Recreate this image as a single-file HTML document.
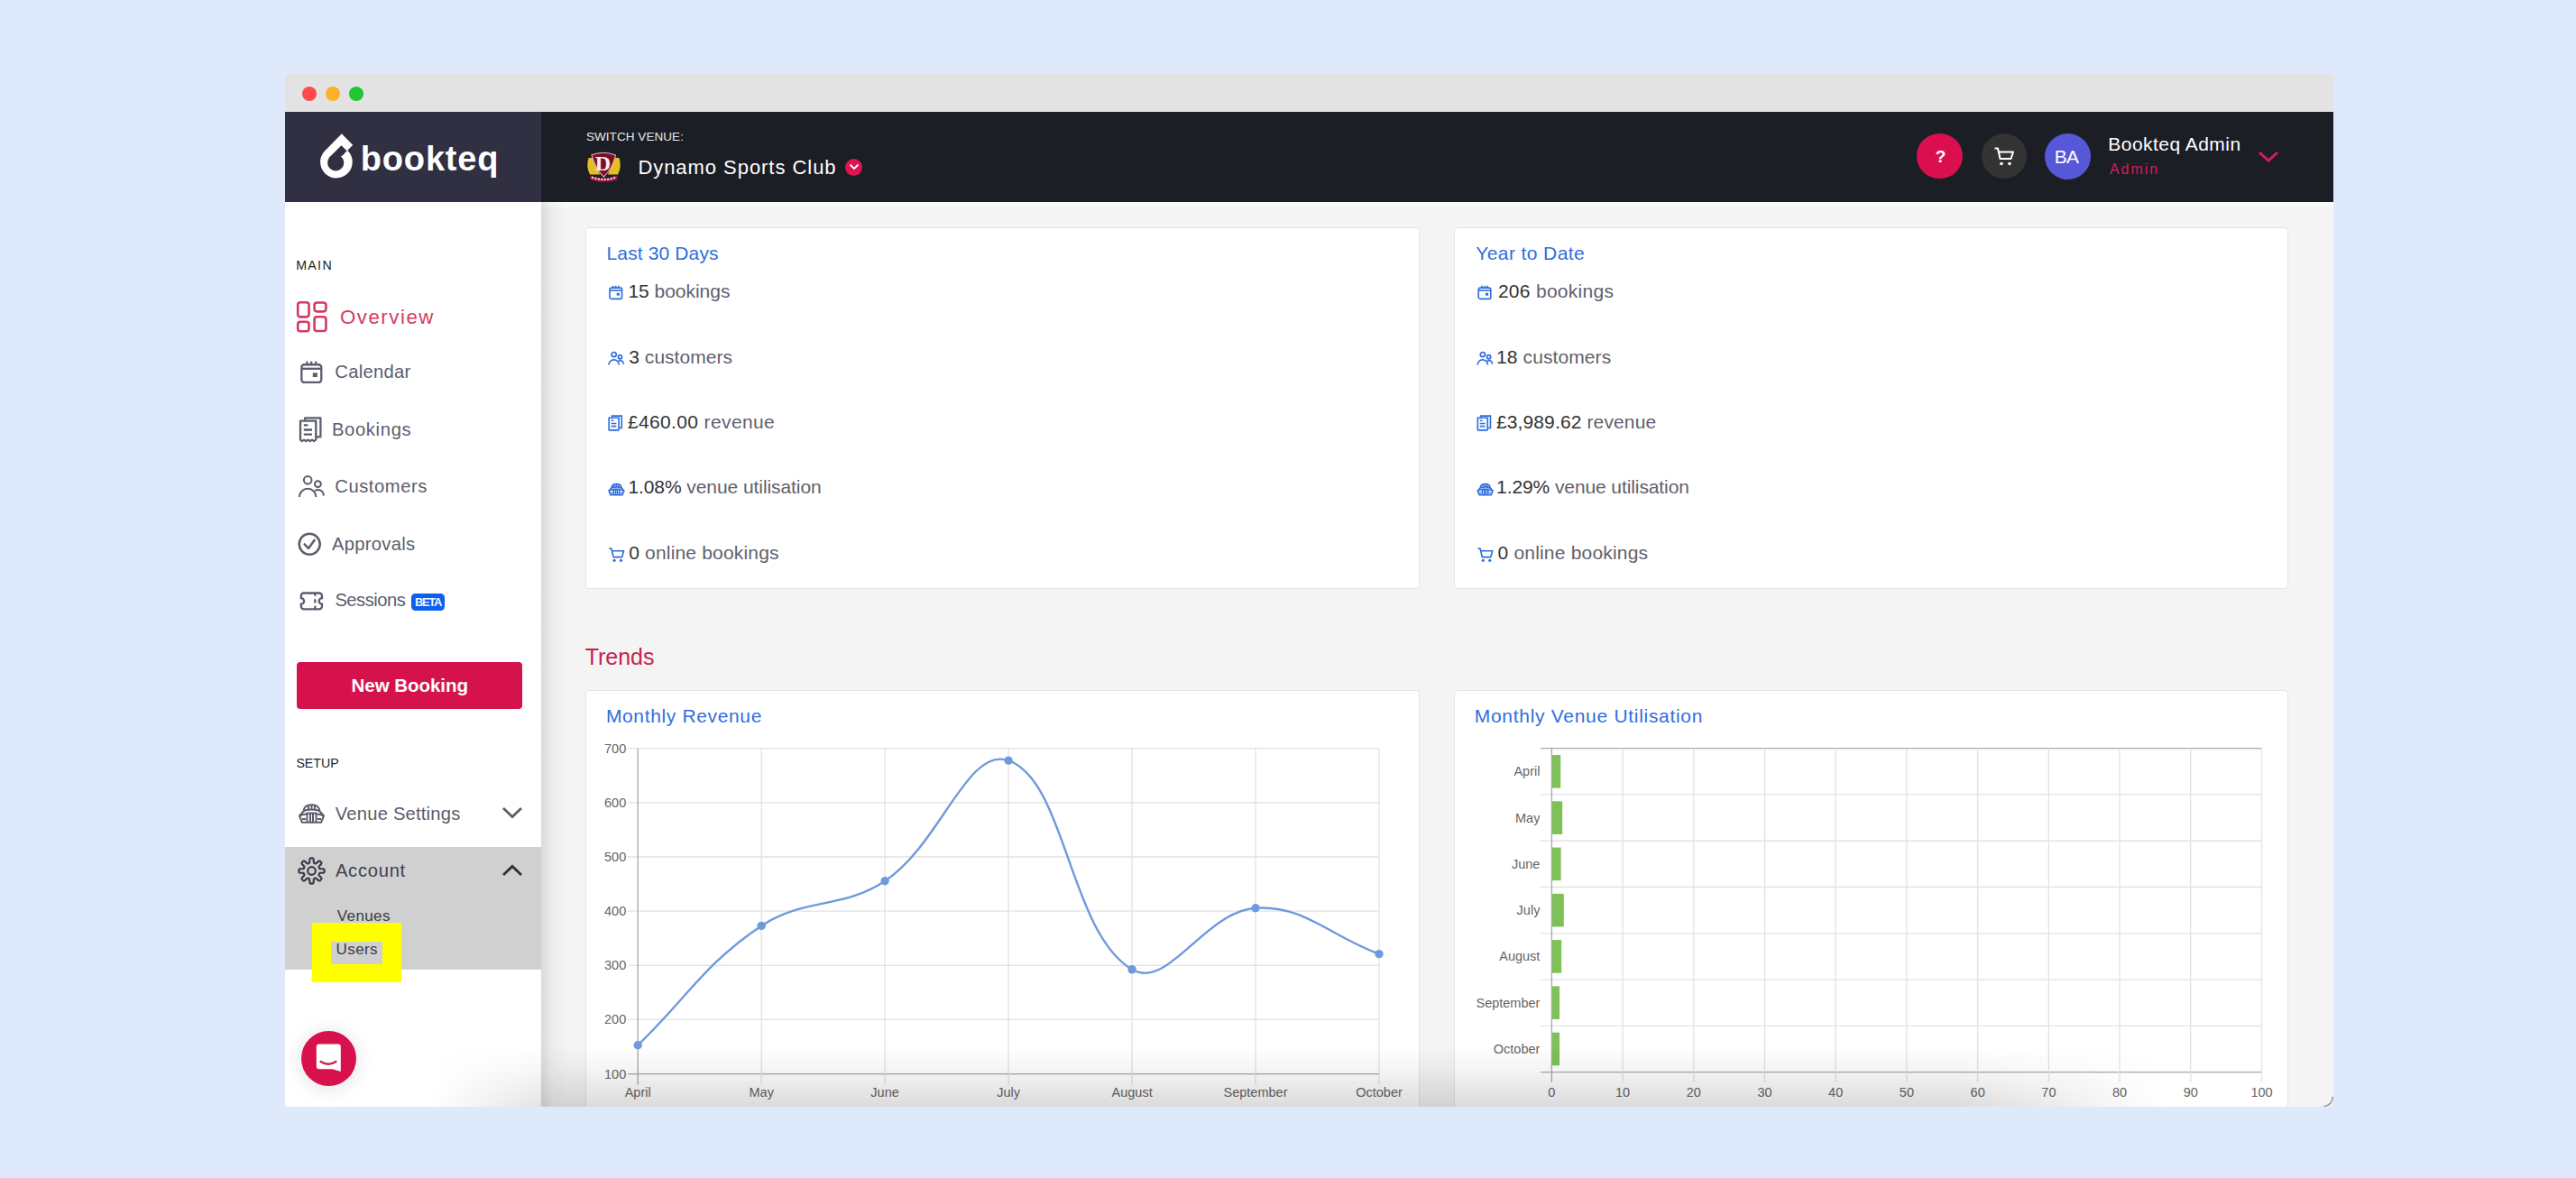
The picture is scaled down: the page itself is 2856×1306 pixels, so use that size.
<!DOCTYPE html>
<html><head><meta charset="utf-8"><style>
html,body{margin:0;padding:0;}
body{width:2856px;height:1306px;background:#deeafc;position:relative;overflow:hidden;font-family:"Liberation Sans", sans-serif;}
.a{position:absolute;}
.t{position:absolute;line-height:1;white-space:nowrap;font-family:"Liberation Sans", sans-serif;}
svg.a{overflow:visible;}
</style></head><body>
<div class="a" style="left:316px;top:82px;width:2270.5px;height:1144.5px;background:#f4f4f4;border-radius:3px 3px 8px 4px;overflow:hidden;"></div>
<div class="a" style="left:316px;top:82px;width:2270.5px;height:42px;background:#e3e3e3;border-radius:3px 3px 0 0;"></div>
<div class="a" style="left:335.1px;top:96.4px;width:16.0px;height:16.0px;border-radius:50%;background:#fe4a49;"></div>
<div class="a" style="left:361.0px;top:96.4px;width:16.0px;height:16.0px;border-radius:50%;background:#fdb12b;"></div>
<div class="a" style="left:387.2px;top:96.4px;width:16.0px;height:16.0px;border-radius:50%;background:#20c634;"></div>
<div class="a" style="left:0;top:0;width:2856px;height:1226.5px;overflow:hidden;">
<div class="t" style="left:655.3px;top:201.8px;font-size:26px;color:#c8234f;font-weight:400;letter-spacing:-0.593px;">Overview</div>
<div class="a" style="left:599.5px;top:223.5px;width:1987.0px;height:10px;background:linear-gradient(180deg,rgba(255,255,255,0.7),rgba(255,255,255,0));"></div>
<div class="a" style="left:599.5px;top:222.5px;width:30px;height:1004.0px;background:linear-gradient(90deg,rgba(30,30,60,0.12),rgba(30,30,60,0.035) 40%,rgba(30,30,60,0));"></div>
<div class="a" style="left:649.2px;top:251.6px;width:924.5999999999999px;height:401.29999999999995px;background:#fff;border:1.5px solid #e4e4e4;box-sizing:border-box;border-radius:4px;"></div>
<div class="a" style="left:1612.4px;top:251.6px;width:924.9000000000001px;height:401.29999999999995px;background:#fff;border:1.5px solid #e4e4e4;box-sizing:border-box;border-radius:4px;"></div>
<div class="t" style="left:672.5px;top:270.2px;font-size:21px;color:#2f6edb;font-weight:400;letter-spacing:0.135px;">Last 30 Days</div>
<div class="t" style="left:1636.3px;top:270.0px;font-size:21px;color:#2f6edb;font-weight:400;letter-spacing:0.395px;">Year to Date</div>
<svg class="a" style="left:0;top:0" width="2856" height="1306" viewBox="0 0 2856 1306"><g transform="translate(675.3000000000001,316.8) scale(0.62)"><g fill="none" stroke="#2f6edb" stroke-width="2.6"><rect x="1.15" y="3.75" width="21.9" height="19.7" rx="3"/><line x1="1.15" y1="8.3" x2="23.05" y2="8.3"/><line x1="7.2" y1="0.1" x2="7.2" y2="4.5"/><line x1="12" y1="0.1" x2="12" y2="4.5"/><line x1="17" y1="0.1" x2="17" y2="4.5"/></g><g fill="#2f6edb"><rect x="13.6" y="12.8" width="5.1" height="4.7"/></g></g></svg>
<div class="t" style="left:696.4px;top:311.9px;font-size:21px;letter-spacing:-0.028px;"><span style="color:#333333">15</span> <span style="color:#5f616c">bookings</span></div>
<svg class="a" style="left:0;top:0" width="2856" height="1306" viewBox="0 0 2856 1306"><g transform="translate(674.4000000000001,390.5) scale(0.607)"><g fill="none" stroke="#2f6edb" stroke-width="2.8"><circle cx="10.3" cy="4.3" r="4.3"/><circle cx="21.5" cy="8.7" r="3.4"/><path d="M1 23 A9.25 9.25 0 0 1 19.5 23"/><path d="M18.3 16.2 C22.1 13.6 27.7 15.6 28 21.6"/></g><g fill="#2f6edb"></g></g></svg>
<div class="t" style="left:697.3px;top:384.8px;font-size:21px;letter-spacing:0.023px;"><span style="color:#333333">3</span> <span style="color:#5f616c">customers</span></div>
<svg class="a" style="left:0;top:0" width="2856" height="1306" viewBox="0 0 2856 1306"><g transform="translate(674.4000000000001,460.4) scale(0.63)"><g fill="none" stroke="#2f6edb" stroke-width="2.6"><path d="M1.2 4.5 H18.5 V25.5 L16.3 26.9 L14.1 25.5 L11.9 26.9 L9.7 25.5 L7.5 26.9 L5.3 25.5 L3.1 26.9 L1.2 25.5 Z"/><path d="M6.4 3.7 V1.2 H23.6 V22.3 H19.2"/><path d="M5 9.3 H9.5 M5 14.4 H14.2 M5 19.5 H14.2"/></g><g fill="#2f6edb"></g></g></svg>
<div class="t" style="left:695.9px;top:457.1px;font-size:21px;letter-spacing:0.369px;"><span style="color:#333333">£460.00</span> <span style="color:#5f616c">revenue</span></div>
<svg class="a" style="left:0;top:0" width="2856" height="1306" viewBox="0 0 2856 1306"><g transform="translate(674.4000000000001,535.8) scale(0.625)"><g fill="none" stroke="#2f6edb" stroke-width="2.5"><path d="M5.5 8.5 C6 3 10 1.2 14.5 1.2 C19 1.2 23 3 23.5 8.5 L28 13.5 L25 20.8 H4 L1 13.5 Z"/><path d="M5.5 8.5 C9 5.8 20 5.8 23.5 8.5"/><path d="M1 13.5 C4 12 7 11.5 9.5 11.5 M28 13.5 C25 12 22 11.5 19.5 11.5"/><path d="M9.5 20.8 V10.5 H19.5 V20.8"/><line x1="13" y1="11" x2="13" y2="20.8"/><line x1="16" y1="11" x2="16" y2="20.8"/><line x1="11" y1="2.5" x2="11" y2="6.5"/><line x1="14.5" y1="1.5" x2="14.5" y2="6"/><line x1="18" y1="2.5" x2="18" y2="6.5"/><path d="M4 17 H8 M21 17 H25"/></g><g fill="#2f6edb"></g></g></svg>
<div class="t" style="left:696.4px;top:529.2px;font-size:21px;letter-spacing:-0.075px;"><span style="color:#333333">1.08%</span> <span style="color:#5f616c">venue utilisation</span></div>
<svg class="a" style="left:0;top:0" width="2856" height="1306" viewBox="0 0 2856 1306"><g transform="translate(674.4000000000001,606.8) scale(0.93)"><g fill="none" stroke="#2f6edb" stroke-width="1.75"><path d="M0.9 1.3 H3.6 L6.2 11.6 H16.3 L18.4 4.3 H4.6" stroke-linejoin="round"/></g><g fill="#2f6edb"><circle cx="7.2" cy="15.6" r="1.7"/><circle cx="15.2" cy="15.6" r="1.7"/></g></g></svg>
<div class="t" style="left:697.2px;top:602.2px;font-size:21px;letter-spacing:0.181px;"><span style="color:#333333">0</span> <span style="color:#5f616c">online bookings</span></div>
<svg class="a" style="left:0;top:0" width="2856" height="1306" viewBox="0 0 2856 1306"><g transform="translate(1638.5,316.8) scale(0.62)"><g fill="none" stroke="#2f6edb" stroke-width="2.6"><rect x="1.15" y="3.75" width="21.9" height="19.7" rx="3"/><line x1="1.15" y1="8.3" x2="23.05" y2="8.3"/><line x1="7.2" y1="0.1" x2="7.2" y2="4.5"/><line x1="12" y1="0.1" x2="12" y2="4.5"/><line x1="17" y1="0.1" x2="17" y2="4.5"/></g><g fill="#2f6edb"><rect x="13.6" y="12.8" width="5.1" height="4.7"/></g></g></svg>
<div class="t" style="left:1660.9px;top:311.9px;font-size:21px;letter-spacing:0.285px;"><span style="color:#333333">206</span> <span style="color:#5f616c">bookings</span></div>
<svg class="a" style="left:0;top:0" width="2856" height="1306" viewBox="0 0 2856 1306"><g transform="translate(1637.6000000000001,390.5) scale(0.607)"><g fill="none" stroke="#2f6edb" stroke-width="2.8"><circle cx="10.3" cy="4.3" r="4.3"/><circle cx="21.5" cy="8.7" r="3.4"/><path d="M1 23 A9.25 9.25 0 0 1 19.5 23"/><path d="M18.3 16.2 C22.1 13.6 27.7 15.6 28 21.6"/></g><g fill="#2f6edb"></g></g></svg>
<div class="t" style="left:1659.1px;top:384.8px;font-size:21px;letter-spacing:0.091px;"><span style="color:#333333">18</span> <span style="color:#5f616c">customers</span></div>
<svg class="a" style="left:0;top:0" width="2856" height="1306" viewBox="0 0 2856 1306"><g transform="translate(1637.6000000000001,460.4) scale(0.63)"><g fill="none" stroke="#2f6edb" stroke-width="2.6"><path d="M1.2 4.5 H18.5 V25.5 L16.3 26.9 L14.1 25.5 L11.9 26.9 L9.7 25.5 L7.5 26.9 L5.3 25.5 L3.1 26.9 L1.2 25.5 Z"/><path d="M6.4 3.7 V1.2 H23.6 V22.3 H19.2"/><path d="M5 9.3 H9.5 M5 14.4 H14.2 M5 19.5 H14.2"/></g><g fill="#2f6edb"></g></g></svg>
<div class="t" style="left:1658.9px;top:457.1px;font-size:21px;letter-spacing:0.133px;"><span style="color:#333333">£3,989.62</span> <span style="color:#5f616c">revenue</span></div>
<svg class="a" style="left:0;top:0" width="2856" height="1306" viewBox="0 0 2856 1306"><g transform="translate(1637.6000000000001,535.8) scale(0.625)"><g fill="none" stroke="#2f6edb" stroke-width="2.5"><path d="M5.5 8.5 C6 3 10 1.2 14.5 1.2 C19 1.2 23 3 23.5 8.5 L28 13.5 L25 20.8 H4 L1 13.5 Z"/><path d="M5.5 8.5 C9 5.8 20 5.8 23.5 8.5"/><path d="M1 13.5 C4 12 7 11.5 9.5 11.5 M28 13.5 C25 12 22 11.5 19.5 11.5"/><path d="M9.5 20.8 V10.5 H19.5 V20.8"/><line x1="13" y1="11" x2="13" y2="20.8"/><line x1="16" y1="11" x2="16" y2="20.8"/><line x1="11" y1="2.5" x2="11" y2="6.5"/><line x1="14.5" y1="1.5" x2="14.5" y2="6"/><line x1="18" y1="2.5" x2="18" y2="6.5"/><path d="M4 17 H8 M21 17 H25"/></g><g fill="#2f6edb"></g></g></svg>
<div class="t" style="left:1659.1px;top:529.2px;font-size:21px;letter-spacing:-0.098px;"><span style="color:#333333">1.29%</span> <span style="color:#5f616c">venue utilisation</span></div>
<svg class="a" style="left:0;top:0" width="2856" height="1306" viewBox="0 0 2856 1306"><g transform="translate(1637.6000000000001,606.8) scale(0.93)"><g fill="none" stroke="#2f6edb" stroke-width="1.75"><path d="M0.9 1.3 H3.6 L6.2 11.6 H16.3 L18.4 4.3 H4.6" stroke-linejoin="round"/></g><g fill="#2f6edb"><circle cx="7.2" cy="15.6" r="1.7"/><circle cx="15.2" cy="15.6" r="1.7"/></g></g></svg>
<div class="t" style="left:1660.5px;top:602.2px;font-size:21px;letter-spacing:0.193px;"><span style="color:#333333">0</span> <span style="color:#5f616c">online bookings</span></div>
<div class="t" style="left:648.7px;top:716.1px;font-size:25px;color:#c8234f;font-weight:400;letter-spacing:-0.02px;">Trends</div>
<div class="a" style="left:649.2px;top:764.5px;width:924.5999999999999px;height:465.0px;background:#fff;border:1.5px solid #e4e4e4;box-sizing:border-box;border-radius:4px;"></div>
<div class="a" style="left:1612.4px;top:764.5px;width:924.9000000000001px;height:465.0px;background:#fff;border:1.5px solid #e4e4e4;box-sizing:border-box;border-radius:4px;"></div>
<div class="t" style="left:671.9px;top:782.7px;font-size:21px;color:#2f6edb;font-weight:400;letter-spacing:0.646px;">Monthly Revenue</div>
<div class="t" style="left:1634.8px;top:783.0px;font-size:21px;color:#2f6edb;font-weight:400;letter-spacing:0.701px;">Monthly Venue Utilisation</div>
<svg class="a" style="left:650.0px;top:810.0px;" width="920" height="420" viewBox="0 0 920 420"><line x1="46" y1="19.70" x2="879.0" y2="19.70" stroke="#e2e2e2" stroke-width="1.3"/><line x1="46" y1="79.85" x2="879.0" y2="79.85" stroke="#e2e2e2" stroke-width="1.3"/><line x1="46" y1="140.00" x2="879.0" y2="140.00" stroke="#e2e2e2" stroke-width="1.3"/><line x1="46" y1="200.15" x2="879.0" y2="200.15" stroke="#e2e2e2" stroke-width="1.3"/><line x1="46" y1="260.30" x2="879.0" y2="260.30" stroke="#e2e2e2" stroke-width="1.3"/><line x1="46" y1="320.45" x2="879.0" y2="320.45" stroke="#e2e2e2" stroke-width="1.3"/><line x1="46" y1="380.60" x2="879.0" y2="380.60" stroke="#a8a8a8" stroke-width="1.3"/><line x1="57.20" y1="19.700000000000045" x2="57.20" y2="392.5" stroke="#a8a8a8" stroke-width="1.3"/><line x1="194.17" y1="19.700000000000045" x2="194.17" y2="392.5" stroke="#e2e2e2" stroke-width="1.3"/><line x1="331.13" y1="19.700000000000045" x2="331.13" y2="392.5" stroke="#e2e2e2" stroke-width="1.3"/><line x1="468.10" y1="19.700000000000045" x2="468.10" y2="392.5" stroke="#e2e2e2" stroke-width="1.3"/><line x1="605.07" y1="19.700000000000045" x2="605.07" y2="392.5" stroke="#e2e2e2" stroke-width="1.3"/><line x1="742.03" y1="19.700000000000045" x2="742.03" y2="392.5" stroke="#e2e2e2" stroke-width="1.3"/><line x1="879.00" y1="19.700000000000045" x2="879.00" y2="392.5" stroke="#e2e2e2" stroke-width="1.3"/><path d="M57.20,348.72 C111.99,295.79 132.08,257.63 194.17,216.39 C241.66,184.85 283.77,198.45 331.13,166.77 C393.34,125.16 422.57,16.88 468.10,33.17 C532.14,56.09 535.20,223.08 605.07,264.81 C644.77,288.53 686.00,200.29 742.03,196.78 C795.57,193.43 824.21,227.31 879.00,247.67" fill="none" stroke="#6f99dd" stroke-width="2.4"/><circle cx="57.20" cy="348.72" r="4.7" fill="#6f99dd"/><circle cx="194.17" cy="216.39" r="4.7" fill="#6f99dd"/><circle cx="331.13" cy="166.77" r="4.7" fill="#6f99dd"/><circle cx="468.10" cy="33.17" r="4.7" fill="#6f99dd"/><circle cx="605.07" cy="264.81" r="4.7" fill="#6f99dd"/><circle cx="742.03" cy="196.78" r="4.7" fill="#6f99dd"/><circle cx="879.00" cy="247.67" r="4.7" fill="#6f99dd"/></svg>
<div class="t" style="right:2161.8px;top:822.6px;font-size:14.5px;color:#666666;font-weight:400;text-align:right;">700</div>
<div class="t" style="right:2161.8px;top:882.8px;font-size:14.5px;color:#666666;font-weight:400;text-align:right;">600</div>
<div class="t" style="right:2161.8px;top:942.9px;font-size:14.5px;color:#666666;font-weight:400;text-align:right;">500</div>
<div class="t" style="right:2161.8px;top:1003.1px;font-size:14.5px;color:#666666;font-weight:400;text-align:right;">400</div>
<div class="t" style="right:2161.8px;top:1063.2px;font-size:14.5px;color:#666666;font-weight:400;text-align:right;">300</div>
<div class="t" style="right:2161.8px;top:1123.4px;font-size:14.5px;color:#666666;font-weight:400;text-align:right;">200</div>
<div class="t" style="right:2161.8px;top:1183.5px;font-size:14.5px;color:#666666;font-weight:400;text-align:right;">100</div>
<div class="t" style="left:557.2px;width:300px;text-align:center;top:1204.3px;font-size:14.5px;color:#666666;font-weight:400;">April</div>
<div class="t" style="left:694.2px;width:300px;text-align:center;top:1204.3px;font-size:14.5px;color:#666666;font-weight:400;">May</div>
<div class="t" style="left:831.1px;width:300px;text-align:center;top:1204.3px;font-size:14.5px;color:#666666;font-weight:400;">June</div>
<div class="t" style="left:968.1px;width:300px;text-align:center;top:1204.3px;font-size:14.5px;color:#666666;font-weight:400;">July</div>
<div class="t" style="left:1105.1px;width:300px;text-align:center;top:1204.3px;font-size:14.5px;color:#666666;font-weight:400;">August</div>
<div class="t" style="left:1242.0px;width:300px;text-align:center;top:1204.3px;font-size:14.5px;color:#666666;font-weight:400;">September</div>
<div class="t" style="left:1379.0px;width:300px;text-align:center;top:1204.3px;font-size:14.5px;color:#666666;font-weight:400;">October</div>
<svg class="a" style="left:650.0px;top:810.0px;" width="1900" height="420" viewBox="0 0 1900 420"><line x1="1058.2" y1="19.70" x2="1857.5" y2="19.70" stroke="#a8a8a8" stroke-width="1.3"/><line x1="1058.2" y1="70.97" x2="1857.5" y2="70.97" stroke="#e2e2e2" stroke-width="1.3"/><line x1="1058.2" y1="122.24" x2="1857.5" y2="122.24" stroke="#e2e2e2" stroke-width="1.3"/><line x1="1058.2" y1="173.51" x2="1857.5" y2="173.51" stroke="#e2e2e2" stroke-width="1.3"/><line x1="1058.2" y1="224.79" x2="1857.5" y2="224.79" stroke="#e2e2e2" stroke-width="1.3"/><line x1="1058.2" y1="276.06" x2="1857.5" y2="276.06" stroke="#e2e2e2" stroke-width="1.3"/><line x1="1058.2" y1="327.33" x2="1857.5" y2="327.33" stroke="#e2e2e2" stroke-width="1.3"/><line x1="1058.2" y1="378.60" x2="1857.5" y2="378.60" stroke="#a8a8a8" stroke-width="1.3"/><line x1="1070.40" y1="19.700000000000045" x2="1070.40" y2="390" stroke="#a8a8a8" stroke-width="1.3"/><line x1="1149.11" y1="19.700000000000045" x2="1149.11" y2="390" stroke="#e2e2e2" stroke-width="1.3"/><line x1="1227.82" y1="19.700000000000045" x2="1227.82" y2="390" stroke="#e2e2e2" stroke-width="1.3"/><line x1="1306.53" y1="19.700000000000045" x2="1306.53" y2="390" stroke="#e2e2e2" stroke-width="1.3"/><line x1="1385.24" y1="19.700000000000045" x2="1385.24" y2="390" stroke="#e2e2e2" stroke-width="1.3"/><line x1="1463.95" y1="19.700000000000045" x2="1463.95" y2="390" stroke="#e2e2e2" stroke-width="1.3"/><line x1="1542.66" y1="19.700000000000045" x2="1542.66" y2="390" stroke="#e2e2e2" stroke-width="1.3"/><line x1="1621.37" y1="19.700000000000045" x2="1621.37" y2="390" stroke="#e2e2e2" stroke-width="1.3"/><line x1="1700.08" y1="19.700000000000045" x2="1700.08" y2="390" stroke="#e2e2e2" stroke-width="1.3"/><line x1="1778.79" y1="19.700000000000045" x2="1778.79" y2="390" stroke="#e2e2e2" stroke-width="1.3"/><line x1="1857.50" y1="19.700000000000045" x2="1857.50" y2="390" stroke="#e2e2e2" stroke-width="1.3"/><rect x="1071.00" y="27.04" width="9.24" height="36.6" fill="#7dc157"/><rect x="1071.00" y="78.31" width="11.21" height="36.6" fill="#7dc157"/><rect x="1071.00" y="129.58" width="9.63" height="36.6" fill="#7dc157"/><rect x="1071.00" y="180.85" width="12.78" height="36.6" fill="#7dc157"/><rect x="1071.00" y="232.12" width="10.18" height="36.6" fill="#7dc157"/><rect x="1071.00" y="283.39" width="8.06" height="36.6" fill="#7dc157"/><rect x="1071.00" y="334.66" width="8.06" height="36.6" fill="#7dc157"/></svg>
<div class="t" style="right:1148.6px;top:848.4px;font-size:14.5px;color:#666666;font-weight:400;text-align:right;">April</div>
<div class="t" style="right:1148.6px;top:899.6px;font-size:14.5px;color:#666666;font-weight:400;text-align:right;">May</div>
<div class="t" style="right:1148.6px;top:950.9px;font-size:14.5px;color:#666666;font-weight:400;text-align:right;">June</div>
<div class="t" style="right:1148.6px;top:1002.2px;font-size:14.5px;color:#666666;font-weight:400;text-align:right;">July</div>
<div class="t" style="right:1148.6px;top:1053.4px;font-size:14.5px;color:#666666;font-weight:400;text-align:right;">August</div>
<div class="t" style="right:1148.6px;top:1104.7px;font-size:14.5px;color:#666666;font-weight:400;text-align:right;">September</div>
<div class="t" style="right:1148.6px;top:1156.0px;font-size:14.5px;color:#666666;font-weight:400;text-align:right;">October</div>
<div class="t" style="left:1570.4px;width:300px;text-align:center;top:1203.9px;font-size:14.5px;color:#666666;font-weight:400;">0</div>
<div class="t" style="left:1649.1px;width:300px;text-align:center;top:1203.9px;font-size:14.5px;color:#666666;font-weight:400;">10</div>
<div class="t" style="left:1727.8px;width:300px;text-align:center;top:1203.9px;font-size:14.5px;color:#666666;font-weight:400;">20</div>
<div class="t" style="left:1806.5px;width:300px;text-align:center;top:1203.9px;font-size:14.5px;color:#666666;font-weight:400;">30</div>
<div class="t" style="left:1885.2px;width:300px;text-align:center;top:1203.9px;font-size:14.5px;color:#666666;font-weight:400;">40</div>
<div class="t" style="left:1963.9px;width:300px;text-align:center;top:1203.9px;font-size:14.5px;color:#666666;font-weight:400;">50</div>
<div class="t" style="left:2042.7px;width:300px;text-align:center;top:1203.9px;font-size:14.5px;color:#666666;font-weight:400;">60</div>
<div class="t" style="left:2121.4px;width:300px;text-align:center;top:1203.9px;font-size:14.5px;color:#666666;font-weight:400;">70</div>
<div class="t" style="left:2200.1px;width:300px;text-align:center;top:1203.9px;font-size:14.5px;color:#666666;font-weight:400;">80</div>
<div class="t" style="left:2278.8px;width:300px;text-align:center;top:1203.9px;font-size:14.5px;color:#666666;font-weight:400;">90</div>
<div class="t" style="left:2357.5px;width:300px;text-align:center;top:1203.9px;font-size:14.5px;color:#666666;font-weight:400;">100</div>
</div>
<div class="a" style="left:316.0px;top:124.0px;width:283.5px;height:99.5px;background:#312f42;"></div>
<div class="a" style="left:599.5px;top:124.0px;width:1987.0px;height:99.5px;background:#1b1e25;"></div>
<svg class="a" style="left:348.0px;top:142.0px;" width="50" height="62" viewBox="0 0 50 62"><path d="M30.8 6.3 L43.2 18.7 L37.3 24.8 A17.8 17.8 0 1 1 11 26.5 Z" fill="#fff"/><circle cx="24.2" cy="38.4" r="9.1" fill="#312f42"/><path d="M16.3 33.2 L30.5 19.2 L36.6 25.3 L31.2 31 Z" fill="#312f42"/></svg>
<div class="t" style="left:399.8px;top:156.6px;font-size:38px;color:#ffffff;font-weight:700;letter-spacing:0.82px;">bookteq</div>
<div class="t" style="left:649.9px;top:145.1px;font-size:13.5px;color:#e9e9ec;font-weight:400;letter-spacing:0.061px;">SWITCH VENUE:</div>
<svg class="a" style="left:646.0px;top:162.0px;" width="46" height="46" viewBox="0 0 46 46"><path d="M6.5 13 Q3.5 23 8 31.5 L19 31.5 L12 13 Z" fill="#e6bf1e"/><path d="M40.5 13 Q43.5 23 39 31.5 L28 31.5 L35 13 Z" fill="#e6bf1e"/><path d="M10 9.8 Q23 4.5 36.5 10 Q33 25 23.4 34.2 Q14 25 10 9.8 Z" fill="#7a0e2a" stroke="#e7b3c2" stroke-width="1.1"/><text x="22.5" y="27" font-family="Liberation Serif" font-weight="700" font-size="24" fill="#fbeef2" text-anchor="middle">D</text><path d="M8.2 32.4 Q23.5 38.5 38.7 32.4 L38 37.2 Q23.5 42.5 8.8 37.2 Z" fill="#9a1a3e"/><path d="M10 34.5 Q23.5 39.5 37 34.5" fill="none" stroke="#f3c9d8" stroke-width="2.2" stroke-dasharray="2.2 1.3"/></svg>
<div class="t" style="left:707.4px;top:175.1px;font-size:22px;color:#ffffff;font-weight:400;letter-spacing:0.952px;">Dynamo Sports Club</div>
<div class="a" style="left:936.7px;top:176.1px;width:19.0px;height:19.0px;border-radius:50%;background:#dc1450;"></div>
<svg class="a" style="left:940.5px;top:181.0px;" width="12" height="8" viewBox="0 0 12 8"><path d="M1.5 1.5 L6 6 L10.5 1.5" fill="none" stroke="#fff" stroke-width="1.8"/></svg>
<div class="a" style="left:2125.3px;top:147.8px;width:50.5px;height:50.5px;border-radius:50%;background:#dc0f4e;"></div>
<div class="t" style="left:2145.7px;top:164.1px;font-size:19px;color:#ffffff;font-weight:700;letter-spacing:-1.29px;">?</div>
<div class="a" style="left:2196.8px;top:147.8px;width:50.5px;height:50.5px;border-radius:50%;background:#333333;"></div>
<svg class="a" style="left:2210.0px;top:163.0px;" width="24" height="22" viewBox="0 0 24 22"><path d="M1.5 1.5 H5 L7.5 13 H19.5 L22 5.5 H6" fill="none" stroke="#fff" stroke-width="2" stroke-linejoin="round"/><circle cx="9" cy="18.5" r="1.8" fill="#fff"/><circle cx="18" cy="18.5" r="1.8" fill="#fff"/></svg>
<div class="a" style="left:2266.7px;top:147.5px;width:51.0px;height:51.0px;border-radius:50%;background:#5757d9;"></div>
<div class="t" style="left:2277.7px;top:162.9px;font-size:21px;color:#ffffff;font-weight:400;letter-spacing:-0.65px;">BA</div>
<div class="t" style="left:2337.3px;top:148.7px;font-size:21px;color:#ffffff;font-weight:400;letter-spacing:0.46px;">Bookteq Admin</div>
<div class="t" style="left:2339.0px;top:179.5px;font-size:16px;color:#d81b5a;font-weight:400;letter-spacing:1.92px;">Admin</div>
<svg class="a" style="left:2503.0px;top:167.0px;" width="24" height="14" viewBox="0 0 24 14"><path d="M2 2 L12 11 L22 2" fill="none" stroke="#d81b5a" stroke-width="3"/></svg>
<div class="a" style="left:316.0px;top:223.5px;width:283.5px;height:1003.0px;background:#ffffff;border-bottom-left-radius:4px;"></div>
<div class="t" style="left:328.2px;top:286.9px;font-size:14.2px;color:#1e1e24;font-weight:400;letter-spacing:1.324px;">MAIN</div>
<svg class="a" style="left:0;top:0" width="2856" height="1306" viewBox="0 0 2856 1306"><g fill="none" stroke="#d53a64" stroke-width="2.6"><rect x="330.2" y="335.3" width="12.3" height="16.1" rx="2.8"/><rect x="348.6" y="335.5" width="12.8" height="9.9" rx="2.8"/><rect x="330.2" y="356.8" width="12.3" height="10.4" rx="2.8"/><rect x="348.6" y="351.2" width="12.8" height="15.8" rx="2.8"/></g></svg>
<div class="t" style="left:377.0px;top:341.4px;font-size:22.2px;color:#d53a64;font-weight:400;letter-spacing:1.561px;">Overview</div>
<svg class="a" style="left:0;top:0" width="2856" height="1306" viewBox="0 0 2856 1306"><g fill="none" stroke="#5b5d6d" stroke-width="2.3"><rect x="334.35" y="404.25" width="21.9" height="19.7" rx="3"/><line x1="334.35" y1="408.8" x2="356.25" y2="408.8"/><line x1="340.4" y1="400.6" x2="340.4" y2="405"/><line x1="345.2" y1="400.6" x2="345.2" y2="405"/><line x1="350.2" y1="400.6" x2="350.2" y2="405"/></g><rect x="346.8" y="413.3" width="5.1" height="4.7" fill="#5b5d6d"/></svg>
<div class="t" style="left:371.3px;top:402.4px;font-size:20.2px;color:#5b5d6d;font-weight:400;letter-spacing:0.3px;">Calendar</div>
<svg class="a" style="left:0;top:0" width="2856" height="1306" viewBox="0 0 2856 1306"><g fill="none" stroke="#5b5d6d" stroke-width="2.3" stroke-linejoin="round"><path d="M333 466.6 H350.3 V487.6 L348.1 489 L345.9 487.6 L343.7 489 L341.5 487.6 L339.3 489 L337.1 487.6 L334.9 489 L333 487.6 Z"/><path d="M338.2 465.8 V463.3 H355.4 V484.4 H351"/><path d="M336.8 471.4 H341.3 M336.8 476.5 H346 M336.8 481.6 H346"/></g></svg>
<div class="t" style="left:367.9px;top:466.4px;font-size:20.2px;color:#5b5d6d;font-weight:400;letter-spacing:0.671px;">Bookings</div>
<svg class="a" style="left:0;top:0" width="2856" height="1306" viewBox="0 0 2856 1306"><g fill="none" stroke="#5b5d6d" stroke-width="2"><circle cx="341.2" cy="532.3" r="4.3"/><circle cx="352.4" cy="536.7" r="3.4"/><path d="M331.9 551 A9.25 9.25 0 0 1 350.4 551"/><path d="M349.2 544.2 C353 541.6 358.6 543.6 358.9 549.6"/></g></svg>
<div class="t" style="left:371.3px;top:529.1px;font-size:20.2px;color:#5b5d6d;font-weight:400;letter-spacing:0.556px;">Customers</div>
<svg class="a" style="left:0;top:0" width="2856" height="1306" viewBox="0 0 2856 1306"><g fill="none" stroke="#5b5d6d" stroke-width="2.5"><circle cx="343.2" cy="603.3" r="11.5"/><path d="M337.6 603.4 L342 607.9 L348.7 598.8" stroke-linecap="round" stroke-linejoin="round"/></g></svg>
<div class="t" style="left:368.0px;top:593.2px;font-size:20.2px;color:#5b5d6d;font-weight:400;letter-spacing:0.277px;">Approvals</div>
<svg class="a" style="left:0;top:0" width="2856" height="1306" viewBox="0 0 2856 1306"><g fill="none" stroke="#5b5d6d" stroke-width="2.3"><path d="M336.8 657.5 H354 A3 3 0 0 1 357 660.5 V663.1 A3.3 3.3 0 0 0 357 669.7 V672.3 A3 3 0 0 1 354 675.3 H336.8 A3 3 0 0 1 333.8 672.3 V669.7 A3.3 3.3 0 0 0 333.8 663.1 V660.5 A3 3 0 0 1 336.8 657.5 Z"/><path d="M349.3 657.5 V660.8 M349.3 664.2 V668.4 M349.3 671.8 V675.3"/></g></svg>
<div class="t" style="left:371.4px;top:655.4px;font-size:20.2px;color:#5b5d6d;font-weight:400;letter-spacing:-0.485px;">Sessions</div>
<div class="a" style="left:455.7px;top:657.6px;width:37.6px;height:19.1px;background:#0d60ee;border-radius:4.5px;"></div>
<div class="t" style="left:460.0px;top:660.9px;font-size:13px;color:#eef6ff;font-weight:700;letter-spacing:-1.372px;">BETA</div>
<div class="a" style="left:329.1px;top:734.3px;width:249.6px;height:51.8px;background:#d5124c;border-radius:4px;"></div>
<div class="t" style="left:389.6px;top:749.6px;font-size:20.5px;color:#ffffff;font-weight:700;letter-spacing:-0.05px;">New Booking</div>
<div class="t" style="left:328.4px;top:839.2px;font-size:14.2px;color:#1e1e24;font-weight:400;letter-spacing:0.016px;">SETUP</div>
<svg class="a" style="left:331.0px;top:891.0px;" width="29" height="22" viewBox="0 0 29 22"><g fill="none" stroke="#5b5d6d" stroke-width="2" stroke-linejoin="round"><path d="M5.5 8.5 C6 3 10 1.2 14.5 1.2 C19 1.2 23 3 23.5 8.5 L28 13.5 L25 20.8 H4 L1 13.5 Z"/><path d="M5.5 8.5 C9 5.8 20 5.8 23.5 8.5"/><path d="M1 13.5 C4 12 7 11.5 9.5 11.5 M28 13.5 C25 12 22 11.5 19.5 11.5"/><path d="M9.5 20.8 V10.5 H19.5 V20.8"/><line x1="13" y1="11" x2="13" y2="20.8"/><line x1="16" y1="11" x2="16" y2="20.8"/><line x1="11" y1="2.5" x2="11" y2="6.5"/><line x1="14.5" y1="1.5" x2="14.5" y2="6"/><line x1="18" y1="2.5" x2="18" y2="6.5"/><path d="M4 17 H8 M21 17 H25"/></g></svg>
<div class="t" style="left:371.8px;top:891.9px;font-size:20.2px;color:#5b5d6d;font-weight:400;letter-spacing:0.205px;">Venue Settings</div>
<svg class="a" style="left:556.0px;top:894.0px;" width="24" height="14" viewBox="0 0 24 14"><path d="M2 2 L12 11.5 L22 2" fill="none" stroke="#5b5d6d" stroke-width="2.8"/></svg>
<div class="a" style="left:316.0px;top:939.2px;width:283.5px;height:136.2px;background:#d0d0d0;"></div>
<svg class="a" style="left:331.0px;top:950.8px;" width="29" height="29" viewBox="0 0 29 29"><g fill="none" stroke="#3a3c48" stroke-width="2.2" stroke-linejoin="round"><path d="M14.50 0.30 L14.87 0.31 L15.24 0.34 L15.61 0.40 L15.97 0.52 L16.31 0.78 L16.58 1.36 L16.74 2.43 L16.77 3.81 L16.81 4.88 L16.92 5.45 L17.10 5.73 L17.30 5.89 L17.51 6.00 L17.73 6.09 L17.94 6.19 L18.16 6.27 L18.38 6.36 L18.61 6.43 L18.86 6.46 L19.18 6.39 L19.67 6.07 L20.45 5.34 L21.45 4.39 L22.32 3.73 L22.92 3.52 L23.35 3.58 L23.69 3.74 L23.99 3.96 L24.27 4.20 L24.54 4.46 L24.80 4.73 L25.04 5.01 L25.26 5.31 L25.42 5.65 L25.48 6.08 L25.27 6.68 L24.61 7.55 L23.66 8.55 L22.93 9.33 L22.61 9.82 L22.54 10.14 L22.57 10.39 L22.64 10.62 L22.73 10.84 L22.81 11.06 L22.91 11.27 L23.00 11.49 L23.11 11.70 L23.27 11.90 L23.55 12.08 L24.12 12.19 L25.19 12.23 L26.57 12.26 L27.64 12.42 L28.22 12.69 L28.48 13.03 L28.60 13.39 L28.66 13.76 L28.69 14.13 L28.70 14.50 L28.69 14.87 L28.66 15.24 L28.60 15.61 L28.48 15.97 L28.22 16.31 L27.64 16.58 L26.57 16.74 L25.19 16.77 L24.12 16.81 L23.55 16.92 L23.27 17.10 L23.11 17.30 L23.00 17.51 L22.91 17.73 L22.81 17.94 L22.73 18.16 L22.64 18.38 L22.57 18.61 L22.54 18.86 L22.61 19.18 L22.93 19.67 L23.66 20.45 L24.61 21.45 L25.27 22.32 L25.48 22.92 L25.42 23.35 L25.26 23.69 L25.04 23.99 L24.80 24.27 L24.54 24.54 L24.27 24.80 L23.99 25.04 L23.69 25.26 L23.35 25.42 L22.92 25.48 L22.32 25.27 L21.45 24.61 L20.45 23.66 L19.67 22.93 L19.18 22.61 L18.86 22.54 L18.61 22.57 L18.38 22.64 L18.16 22.73 L17.94 22.81 L17.73 22.91 L17.51 23.00 L17.30 23.11 L17.10 23.27 L16.92 23.55 L16.81 24.12 L16.77 25.19 L16.74 26.57 L16.58 27.64 L16.31 28.22 L15.97 28.48 L15.61 28.60 L15.24 28.66 L14.87 28.69 L14.50 28.70 L14.13 28.69 L13.76 28.66 L13.39 28.60 L13.03 28.48 L12.69 28.22 L12.42 27.64 L12.26 26.57 L12.23 25.19 L12.19 24.12 L12.08 23.55 L11.90 23.27 L11.70 23.11 L11.49 23.00 L11.27 22.91 L11.06 22.81 L10.84 22.73 L10.62 22.64 L10.39 22.57 L10.14 22.54 L9.82 22.61 L9.33 22.93 L8.55 23.66 L7.55 24.61 L6.68 25.27 L6.08 25.48 L5.65 25.42 L5.31 25.26 L5.01 25.04 L4.73 24.80 L4.46 24.54 L4.20 24.27 L3.96 23.99 L3.74 23.69 L3.58 23.35 L3.52 22.92 L3.73 22.32 L4.39 21.45 L5.34 20.45 L6.07 19.67 L6.39 19.18 L6.46 18.86 L6.43 18.61 L6.36 18.38 L6.27 18.16 L6.19 17.94 L6.09 17.73 L6.00 17.51 L5.89 17.30 L5.73 17.10 L5.45 16.92 L4.88 16.81 L3.81 16.77 L2.43 16.74 L1.36 16.58 L0.78 16.31 L0.52 15.97 L0.40 15.61 L0.34 15.24 L0.31 14.87 L0.30 14.50 L0.31 14.13 L0.34 13.76 L0.40 13.39 L0.52 13.03 L0.78 12.69 L1.36 12.42 L2.43 12.26 L3.81 12.23 L4.88 12.19 L5.45 12.08 L5.73 11.90 L5.89 11.70 L6.00 11.49 L6.09 11.27 L6.19 11.06 L6.27 10.84 L6.36 10.62 L6.43 10.39 L6.46 10.14 L6.39 9.82 L6.07 9.33 L5.34 8.55 L4.39 7.55 L3.73 6.68 L3.52 6.08 L3.58 5.65 L3.74 5.31 L3.96 5.01 L4.20 4.73 L4.46 4.46 L4.73 4.20 L5.01 3.96 L5.31 3.74 L5.65 3.58 L6.08 3.52 L6.68 3.73 L7.55 4.39 L8.55 5.34 L9.33 6.07 L9.82 6.39 L10.14 6.46 L10.39 6.43 L10.62 6.36 L10.84 6.27 L11.06 6.19 L11.27 6.09 L11.49 6.00 L11.70 5.89 L11.90 5.73 L12.08 5.45 L12.19 4.88 L12.23 3.81 L12.26 2.43 L12.42 1.36 L12.69 0.78 L13.03 0.52 L13.39 0.40 L13.76 0.34 L14.13 0.31 Z"/><circle cx="14.5" cy="14.5" r="4.3"/></g></svg>
<div class="t" style="left:371.9px;top:954.9px;font-size:20.2px;color:#3f414d;font-weight:400;letter-spacing:0.73px;">Account</div>
<svg class="a" style="left:556.0px;top:957.5px;" width="24" height="14" viewBox="0 0 24 14"><path d="M2 12 L12 2.5 L22 12" fill="none" stroke="#2d2f3a" stroke-width="2.8"/></svg>
<div class="t" style="left:373.7px;top:1007.1px;font-size:17px;color:#3a3c46;font-weight:400;letter-spacing:0.417px;">Venues</div>
<div class="a" style="left:345.8px;top:1023.0px;width:99.3px;height:66.3px;background:#ffff00;"></div>
<div class="a" style="left:366.8px;top:1043.6px;width:57.4px;height:25.1px;background:#d0d0d0;"></div>
<div class="t" style="left:372.5px;top:1044.0px;font-size:17px;color:#3a3c46;font-weight:400;letter-spacing:0.425px;">Users</div>
<div class="a" style="left:333.8px;top:1142.8px;width:61.0px;height:61.0px;border-radius:50%;background:#d8104c;box-shadow:0 2px 22px rgba(0,0,0,0.13);"></div>
<svg class="a" style="left:0;top:0" width="2856" height="1306" viewBox="0 0 2856 1306"><path d="M353.8 1157.5 H374.8 Q377.8 1157.5 377.8 1160.5 V1188.1 L368.6 1185.2 H353.8 Q350.8 1185.2 350.8 1182.2 V1160.5 Q350.8 1157.5 353.8 1157.5 Z" fill="#fff"/><path d="M354.8 1176.6 Q364 1182.8 373.3 1176.6" fill="none" stroke="#c8204c" stroke-width="2.4"/></svg>
<div class="a" style="left:480px;top:1160px;width:1920px;height:66.5px;background:linear-gradient(180deg,rgba(0,0,0,0),rgba(0,0,0,0.045) 40%,rgba(0,0,0,0.14));-webkit-mask-image:linear-gradient(90deg,transparent 0,#000 8%,#000 88%,transparent 100%);"></div>
<svg class="a" style="left:0;top:0" width="2856" height="1306" viewBox="0 0 2856 1306"><path d="M2586.2 1216.5 A10 10 0 0 1 2577 1226.4" fill="none" stroke="#6a6a6a" stroke-width="1.4" stroke-linecap="round" opacity="0.75"/></svg>
</body></html>
